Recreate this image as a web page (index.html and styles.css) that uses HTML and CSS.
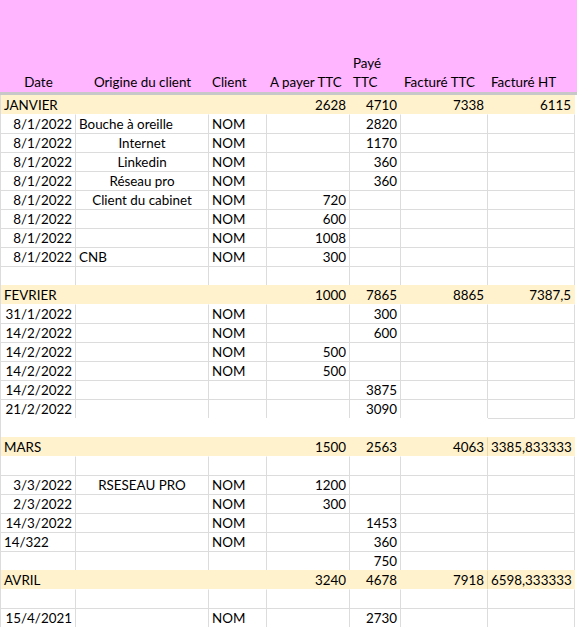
FILE: index.html
```html
<!DOCTYPE html>
<html lang="fr">
<head>
<meta charset="utf-8">
<title>Suivi clients</title>
<link rel="stylesheet" href="styles.css">
</head>
<body>
<div class="head">
  <div class="ctr">Date</div>
  <div class="ctr">Origine du client</div>
  <div>Client</div>
  <div>A payer TTC</div>
  <div>Payé<br>TTC</div>
  <div>Facturé TTC</div>
  <div>Facturé HT</div>
</div>
<div class="band"></div>
<div class="sheet">
  <div class="row month"><div class="lbl">JANVIER</div><div></div><div></div><div class="r">2628</div><div class="r">4710</div><div class="r">7338</div><div class="r">6115</div></div>
  <div class="row after"><div class="r">8/1/2022</div><div>Bouche à oreille</div><div>NOM</div><div></div><div class="r">2820</div><div></div><div></div></div>
  <div class="row"><div class="r">8/1/2022</div><div class="ctr">Internet</div><div>NOM</div><div></div><div class="r">1170</div><div></div><div></div></div>
  <div class="row"><div class="r">8/1/2022</div><div class="ctr">Linkedin</div><div>NOM</div><div></div><div class="r">360</div><div></div><div></div></div>
  <div class="row"><div class="r">8/1/2022</div><div class="ctr">Réseau pro</div><div>NOM</div><div></div><div class="r">360</div><div></div><div></div></div>
  <div class="row"><div class="r">8/1/2022</div><div class="ctr">Client du cabinet</div><div>NOM</div><div class="r">720</div><div></div><div></div><div></div></div>
  <div class="row"><div class="r">8/1/2022</div><div></div><div>NOM</div><div class="r">600</div><div></div><div></div><div></div></div>
  <div class="row"><div class="r">8/1/2022</div><div></div><div>NOM</div><div class="r">1008</div><div></div><div></div><div></div></div>
  <div class="row"><div class="r">8/1/2022</div><div>CNB</div><div>NOM</div><div class="r">300</div><div></div><div></div><div></div></div>
  <div class="row"><div></div><div></div><div></div><div></div><div></div><div></div><div></div></div>

  <div class="row month"><div class="lbl">FEVRIER</div><div></div><div></div><div class="r">1000</div><div class="r">7865</div><div class="r">8865</div><div class="r">7387,5</div></div>
  <div class="row after"><div class="r">31/1/2022</div><div></div><div>NOM</div><div></div><div class="r">300</div><div></div><div></div></div>
  <div class="row"><div class="r">14/2/2022</div><div></div><div>NOM</div><div></div><div class="r">600</div><div></div><div></div></div>
  <div class="row"><div class="r">14/2/2022</div><div></div><div>NOM</div><div class="r">500</div><div></div><div></div><div></div></div>
  <div class="row"><div class="r">14/2/2022</div><div></div><div>NOM</div><div class="r">500</div><div></div><div></div><div></div></div>
  <div class="row"><div class="r">14/2/2022</div><div></div><div></div><div></div><div class="r">3875</div><div></div><div></div></div>
  <div class="row"><div class="r">21/2/2022</div><div></div><div></div><div></div><div class="r">3090</div><div></div><div></div></div>
  <div class="row gap"><div></div><div></div><div></div><div></div><div></div><div></div><div></div></div>

  <div class="row month tan"><div class="lbl">MARS</div><div></div><div></div><div class="r">1500</div><div class="r">2563</div><div class="r">4063</div><div class="r">3385,833333</div></div>
  <div class="row after"><div></div><div></div><div></div><div></div><div></div><div></div><div></div></div>
  <div class="row"><div class="r">3/3/2022</div><div class="ctr">RSESEAU PRO</div><div>NOM</div><div class="r">1200</div><div></div><div></div><div></div></div>
  <div class="row"><div class="r">2/3/2022</div><div></div><div>NOM</div><div class="r">300</div><div></div><div></div><div></div></div>
  <div class="row"><div class="r">14/3/2022</div><div></div><div>NOM</div><div></div><div class="r">1453</div><div></div><div></div></div>
  <div class="row"><div>14/322</div><div></div><div>NOM</div><div></div><div class="r">360</div><div></div><div></div></div>
  <div class="row"><div></div><div></div><div></div><div></div><div class="r">750</div><div></div><div></div></div>

  <div class="row month tan"><div class="lbl">AVRIL</div><div></div><div></div><div class="r">3240</div><div class="r">4678</div><div class="r">7918</div><div class="r">6598,333333</div></div>
  <div class="row after"><div></div><div></div><div></div><div></div><div></div><div></div><div></div></div>
  <div class="row"><div class="r">15/4/2021</div><div></div><div>NOM</div><div></div><div class="r">2730</div><div></div><div></div></div>
</div>
</body>
</html>
```

FILE: styles.css
```css
* {
  box-sizing: border-box;
}

html,
body {
  margin: 0;
  padding: 0;
  background: #ffffff;
}

body {
  width: 577px;
  height: 627px;
  overflow: hidden;
  font-family: Lato, "Liberation Sans", sans-serif;
  font-size: 13.4px;
  color: #000000;
}

.head {
  height: 92px;
  background: #ffb5ff;
  display: grid;
  grid-template-columns: 75px 133px 58px 83px 51px 87px 87px;
  align-items: end;
  padding-left: 1px;
  padding-bottom: 0;
}

.head > div {
  line-height: 19px;
  padding: 0 3px;
  white-space: nowrap;
}

.band {
  height: 3px;
  background: #c8c8c8;
}

.sheet {
  width: 575px;
  border-left: 1px solid #dcdcdc;
}

.row {
  display: grid;
  grid-template-columns: 75px 133px 58px 83px 51px 87px 87px;
  height: 19px;
}

.row > div {
  border-top: 1px solid #dcdcdc;
  border-right: 1px solid #dcdcdc;
  padding: 1px 3px 0;
  line-height: 17px;
  white-space: nowrap;
}

.r {
  text-align: right;
}

.ctr {
  text-align: center;
}

.month {
  background: #fff2cc;
}

.month > div {
  border-color: transparent;
}

.month .lbl {
  overflow: visible;
}

.month.tan > div:nth-child(6) {
  border-right-color: #e8d8aa;
}

.after > div {
  border-top-color: transparent;
}

.gap > div {
  border-color: transparent;
}

.gap > div:last-child {
  border-top-color: #dcdcdc;
}
```
